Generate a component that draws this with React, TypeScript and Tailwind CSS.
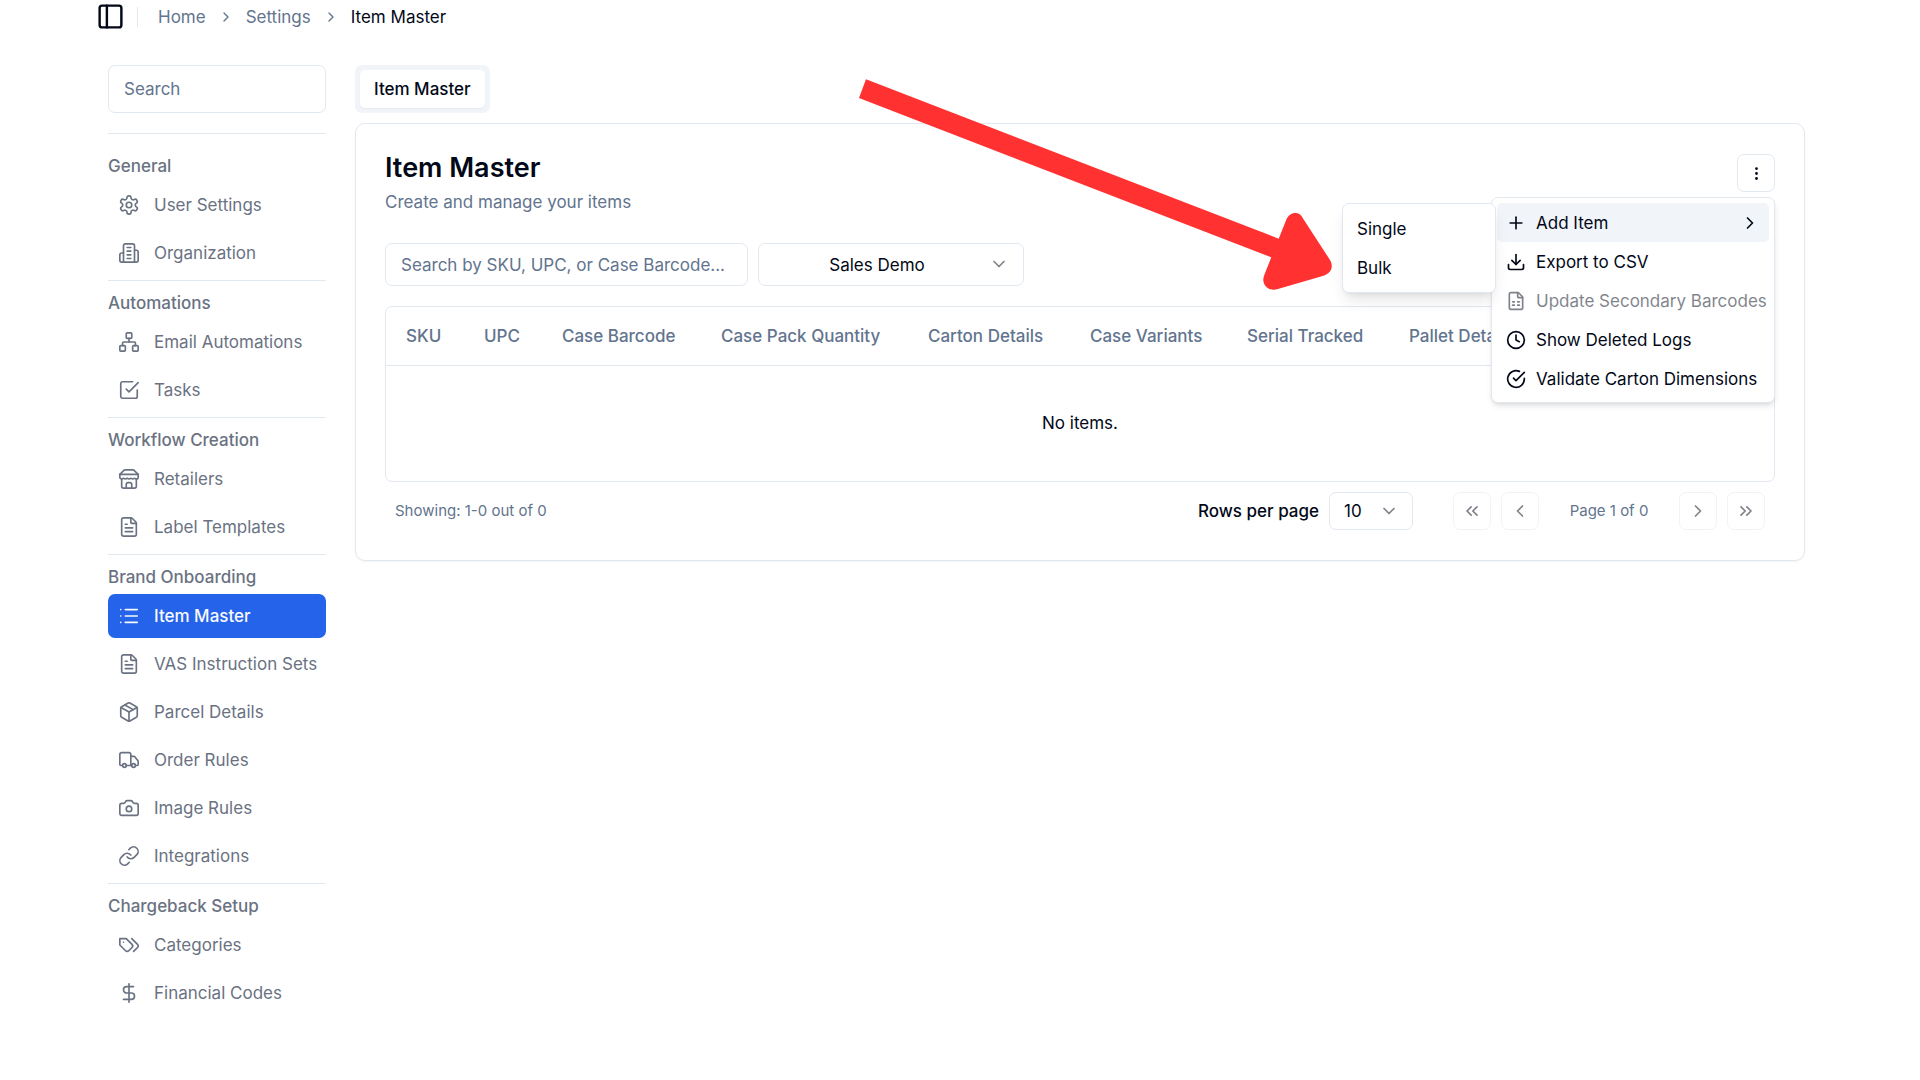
import React, { useState } from 'react';
import {
  Camera,
  ChevronDown,
  ChevronLeft,
  ChevronRight,
  ChevronsLeft,
  ChevronsRight,
  Clock,
  DollarSign,
  Download,
  EllipsisVertical,
  FileSpreadsheet,
  FileText,
  Link,
  List,
  Network,
  Package,
  PanelLeft,
  Plus,
  Truck,
  createLucideIcon,
  type LucideIcon,
} from 'lucide-react';

const Gear = createLucideIcon('Gear', [
  [
    'path',
    {
      d: 'M12.22 2h-.44a2 2 0 0 0-2 2v.18a2 2 0 0 1-1 1.73l-.43.25a2 2 0 0 1-2 0l-.15-.08a2 2 0 0 0-2.73.73l-.22.38a2 2 0 0 0 .73 2.73l.15.1a2 2 0 0 1 1 1.72v.51a2 2 0 0 1-1 1.74l-.15.09a2 2 0 0 0-.73 2.73l.22.38a2 2 0 0 0 2.73.73l.15-.08a2 2 0 0 1 2 0l.43.25a2 2 0 0 1 1 1.73V20a2 2 0 0 0 2 2h.44a2 2 0 0 0 2-2v-.18a2 2 0 0 1 1-1.73l.43-.25a2 2 0 0 1 2 0l.15.08a2 2 0 0 0 2.73-.73l.22-.39a2 2 0 0 0-.73-2.73l-.15-.08a2 2 0 0 1-1-1.74v-.5a2 2 0 0 1 1-1.74l.15-.09a2 2 0 0 0 .73-2.73l-.22-.38a2 2 0 0 0-2.73-.73l-.15.08a2 2 0 0 1-2 0l-.43-.25a2 2 0 0 1-1-1.73V4a2 2 0 0 0-2-2z',
      key: 'body',
    },
  ],
  ['circle', { cx: '12', cy: '12', r: '3', key: 'hub' }],
]);

const Building = createLucideIcon('Building', [
  ['path', { d: 'M6 22V4a2 2 0 0 1 2-2h8a2 2 0 0 1 2 2v18Z', key: 'tower' }],
  ['path', { d: 'M6 12H4a2 2 0 0 0-2 2v6a2 2 0 0 0 2 2h2', key: 'left' }],
  ['path', { d: 'M18 9h2a2 2 0 0 1 2 2v9a2 2 0 0 1-2 2h-2', key: 'right' }],
  ['path', { d: 'M10 6h4M10 10h4M10 14h4M10 18h4', key: 'windows' }],
]);

const Shop = createLucideIcon('Shop', [
  ['path', { d: 'm2 7 4.41-4.41A2 2 0 0 1 7.83 2h8.34a2 2 0 0 1 1.42.59L22 7', key: 'roof' }],
  ['path', { d: 'M4 12v8a2 2 0 0 0 2 2h12a2 2 0 0 0 2-2v-8', key: 'walls' }],
  ['path', { d: 'M15 22v-4a2 2 0 0 0-2-2h-2a2 2 0 0 0-2 2v4', key: 'door' }],
  ['path', { d: 'M2 7h20', key: 'line' }],
  [
    'path',
    {
      d: 'M22 7v3a2 2 0 0 1-2 2a2.7 2.7 0 0 1-1.59-.63.7.7 0 0 0-.82 0A2.7 2.7 0 0 1 16 12a2.7 2.7 0 0 1-1.59-.63.7.7 0 0 0-.82 0A2.7 2.7 0 0 1 12 12a2.7 2.7 0 0 1-1.59-.63.7.7 0 0 0-.82 0A2.7 2.7 0 0 1 8 12a2.7 2.7 0 0 1-1.59-.63.7.7 0 0 0-.82 0A2.7 2.7 0 0 1 4 12a2 2 0 0 1-2-2V7',
      key: 'awning',
    },
  ],
]);

const PriceTags = createLucideIcon('PriceTags', [
  [
    'path',
    {
      d: 'M9 5H2v7l6.29 6.29c.94.94 2.48.94 3.42 0l3.58-3.58c.94-.94.94-2.48 0-3.42L9 5Z',
      key: 'tag',
    },
  ],
  ['path', { d: 'M6 9.01V9', key: 'hole' }],
  ['path', { d: 'm15 5 6.3 6.3a2.4 2.4 0 0 1 0 3.4L17 19', key: 'back' }],
]);

const CheckBox = createLucideIcon('CheckBox', [
  ['path', { d: 'm9 11 3 3L22 4', key: 'tick' }],
  ['path', { d: 'M21 12v7a2 2 0 0 1-2 2H5a2 2 0 0 1-2-2V5a2 2 0 0 1 2-2h11', key: 'box' }],
]);

const CheckRing = createLucideIcon('CheckRing', [
  ['path', { d: 'M22 11.08V12a10 10 0 1 1-5.93-9.14', key: 'ring' }],
  ['path', { d: 'm9 11 3 3L22 4', key: 'tick' }],
]);

interface NavItem {
  label: string;
  icon: LucideIcon;
}

interface NavGroup {
  title: string;
  items: NavItem[];
}

const navGroups: NavGroup[] = [
  {
    title: 'General',
    items: [
      { label: 'User Settings', icon: Gear },
      { label: 'Organization', icon: Building },
    ],
  },
  {
    title: 'Automations',
    items: [
      { label: 'Email Automations', icon: Network },
      { label: 'Tasks', icon: CheckBox },
    ],
  },
  {
    title: 'Workflow Creation',
    items: [
      { label: 'Retailers', icon: Shop },
      { label: 'Label Templates', icon: FileText },
    ],
  },
  {
    title: 'Brand Onboarding',
    items: [
      { label: 'Item Master', icon: List },
      { label: 'VAS Instruction Sets', icon: FileText },
      { label: 'Parcel Details', icon: Package },
      { label: 'Order Rules', icon: Truck },
      { label: 'Image Rules', icon: Camera },
      { label: 'Integrations', icon: Link },
    ],
  },
  {
    title: 'Chargeback Setup',
    items: [
      { label: 'Categories', icon: PriceTags },
      { label: 'Financial Codes', icon: DollarSign },
    ],
  },
];

const columns = [
  { label: 'SKU', width: 'w-[78px]' },
  { label: 'UPC', width: 'w-[78px]' },
  { label: 'Case Barcode', width: 'w-[159px]' },
  { label: 'Case Pack Quantity', width: 'w-[207px]' },
  { label: 'Carton Details', width: 'w-[162px]' },
  { label: 'Case Variants', width: 'w-[157px]' },
  { label: 'Serial Tracked', width: 'w-[162px]' },
  { label: 'Pallet Details', width: '' },
];

const Header = () => (
  <header className="flex h-[33px] items-center pl-24">
    <button aria-label="Toggle sidebar" className="cursor-pointer">
      <PanelLeft className="size-[29px]" />
    </button>
    <div className="ml-3 h-5 w-px bg-slate-200" />
    <nav aria-label="Breadcrumb" className="ml-5 flex items-center gap-3 text-slate-500">
      <a href="#home">Home</a>
      <ChevronRight className="size-4" />
      <a href="#settings">Settings</a>
      <ChevronRight className="size-4" />
      <span className="text-[#020817]">Item Master</span>
    </nav>
  </header>
);

const Sidebar = () => (
  <aside className="w-[218px] shrink-0 text-gray-500">
    <input
      type="search"
      aria-label="Search"
      placeholder="Search"
      className="mb-5 block h-12 w-full rounded-[7px] border border-slate-200 px-[15px] placeholder:text-slate-500"
    />
    {navGroups.map((group, i) => (
      <section
        key={group.title}
        className={`border-t border-slate-200 pb-[5px] ${i === 0 ? 'pt-5' : 'pt-[10px]'}`}
      >
        <h2 className="mb-[5px] font-medium">{group.title}</h2>
        <ul className="flex flex-col gap-1">
          {group.items.map(({ label, icon: Icon }) => (
            <li key={label}>
              <a
                href="#"
                className={`flex h-11 items-center gap-[14px] rounded-[7px] pl-[10px] whitespace-nowrap ${
                  label === 'Item Master' ? 'bg-[#2563eb] font-medium text-slate-50' : ''
                }`}
              >
                <Icon className="size-[22px] shrink-0" strokeWidth={1.8} />
                {label}
              </a>
            </li>
          ))}
        </ul>
      </section>
    ))}
  </aside>
);

const ActionsMenu = () => {
  const [open, setOpen] = useState(true);
  const item = 'flex h-[39px] w-full items-center rounded-[5px] px-[9px] whitespace-nowrap';

  return (
    <div className="relative">
      <button
        aria-label="Actions"
        onClick={() => setOpen(!open)}
        className="flex size-[38px] cursor-pointer items-center justify-center rounded-[7px] border border-slate-200"
      >
        <EllipsisVertical className="size-[17px]" />
      </button>

      {open && (
        <div className="absolute top-[43px] right-0 z-10 w-[284px] rounded-[7px] border border-slate-200 bg-white px-[5px] pt-[5px] pb-1 shadow-md">
          <button className={`${item} gap-[10px] bg-slate-100`}>
            <Plus className="size-5 shrink-0" />
            Add Item
            <ChevronRight className="ml-auto size-5" />
          </button>
          <button className={`${item} gap-[10px]`}>
            <Download className="size-5 shrink-0" />
            Export to CSV
          </button>
          <button disabled className={`${item} gap-[10px] opacity-50`}>
            <FileSpreadsheet className="size-5 shrink-0" />
            Update Secondary Barcodes
          </button>
          <button className={`${item} gap-[10px]`}>
            <Clock className="size-5 shrink-0" />
            Show Deleted Logs
          </button>
          <button className={`${item} gap-[10px]`}>
            <CheckRing className="size-5 shrink-0" />
            Validate Carton Dimensions
          </button>

          {/* Add Item submenu */}
          <div className="absolute top-[5px] right-[278px] w-[154px] rounded-[7px] border border-slate-200 bg-white p-[5px] shadow-lg">
            <button className={item}>Single</button>
            <button className={item}>Bulk</button>
          </div>
        </div>
      )}
    </div>
  );
};

const PageButton = ({ label, icon: Icon }: NavItem) => (
  <button
    aria-label={label}
    disabled
    className="flex size-[38px] items-center justify-center rounded-[7px] border border-slate-200 opacity-50"
  >
    <Icon className="size-5" />
  </button>
);

const Pagination = () => (
  <div className="mt-[10px] flex items-center justify-between px-[10px]">
    <p className="text-[15px] text-slate-500">Showing: 1-0 out of 0</p>
    <div className="flex items-center">
      <label htmlFor="rows" className="font-medium">
        Rows per page
      </label>
      <div className="relative ml-[10px]">
        <select
          id="rows"
          className="block h-[38px] w-[84px] appearance-none rounded-[7px] border border-slate-200 bg-white pl-[14px]"
        >
          <option>10</option>
        </select>
        <ChevronDown className="pointer-events-none absolute top-[9px] right-[14px] size-5 opacity-50" />
      </div>
      <div className="ml-10 flex items-center gap-[10px]">
        <PageButton label="First page" icon={ChevronsLeft} />
        <PageButton label="Previous page" icon={ChevronLeft} />
        <span className="w-[120px] text-center text-[15px] text-slate-500">Page 1 of 0</span>
        <PageButton label="Next page" icon={ChevronRight} />
        <PageButton label="Last page" icon={ChevronsRight} />
      </div>
    </div>
  </div>
);

const ItemMaster = () => (
  <section className="rounded-[10px] border border-slate-200 px-[29px] py-[30px] shadow-xs">
    <div className="flex items-start justify-between">
      <div>
        <h1 className="text-[27px] leading-7 font-semibold">Item Master</h1>
        <p className="mt-2 text-slate-500">Create and manage your items</p>
      </div>
      <ActionsMenu />
    </div>

    <div className="mt-[29px] flex gap-[10px]">
      <input
        type="text"
        aria-label="Search items"
        placeholder="Search by SKU, UPC, or Case Barcode..."
        className="h-[43px] w-[363px] rounded-[7px] border border-slate-200 px-[15px] placeholder:text-slate-500"
      />
      <div className="relative">
        <select
          aria-label="Brand"
          className="block h-[43px] w-[266px] appearance-none rounded-[7px] border border-slate-200 bg-white pr-10 pl-3 text-center [text-align-last:center]"
        >
          <option>Sales Demo</option>
        </select>
        <ChevronDown className="pointer-events-none absolute top-[11px] right-[15px] size-5 opacity-50" />
      </div>
    </div>

    <div className="mt-5 overflow-hidden rounded-[7px] border border-slate-200">
      <table className="w-full table-fixed">
        <thead>
          <tr className="h-[58px] border-b border-slate-200 text-left text-slate-500">
            {columns.map((column) => (
              <th key={column.label} className={`pl-5 font-medium whitespace-nowrap ${column.width}`}>
                {column.label}
              </th>
            ))}
          </tr>
        </thead>
        <tbody>
          <tr className="h-[116px]">
            <td colSpan={columns.length} className="text-center">
              No items.
            </td>
          </tr>
        </tbody>
      </table>
    </div>

    <Pagination />
  </section>
);

const PointerArrow = () => (
  <svg
    className="pointer-events-none absolute top-[70px] left-[850px] z-20 h-[230px] w-[490px]"
    viewBox="850 70 490 230"
    fill="#ff3131"
    aria-hidden="true"
  >
    <path d="M866 79.3L1278.7 238.7L1286 220.5C1289 211.5 1299.500 210.500 1303 218.500L1330 260C1334 267 1331 273.500 1323.500 275.700L1277 289.300C1268 291.500 1260.500 284 1264.300 275L1271.300 257.300L859 98Z" />
  </svg>
);

export default function App() {
  return (
    <div className="relative min-h-screen bg-white font-['Inter',sans-serif] text-[17px] leading-6 text-[#020817]">
      <Header />
      <div className="flex gap-[29px] pt-8 pr-[115px] pl-[108px]">
        <Sidebar />
        <main className="min-w-0 flex-1">
          <div role="tablist" className="mb-[10px] inline-flex h-12 items-center rounded-[7px] bg-slate-100 p-[5px] align-top">
            <button role="tab" aria-selected className="h-[38px] rounded-[5px] bg-white px-[14px] font-medium shadow-xs">
              Item Master
            </button>
          </div>
          <ItemMaster />
        </main>
      </div>
      <PointerArrow />
    </div>
  );
}
